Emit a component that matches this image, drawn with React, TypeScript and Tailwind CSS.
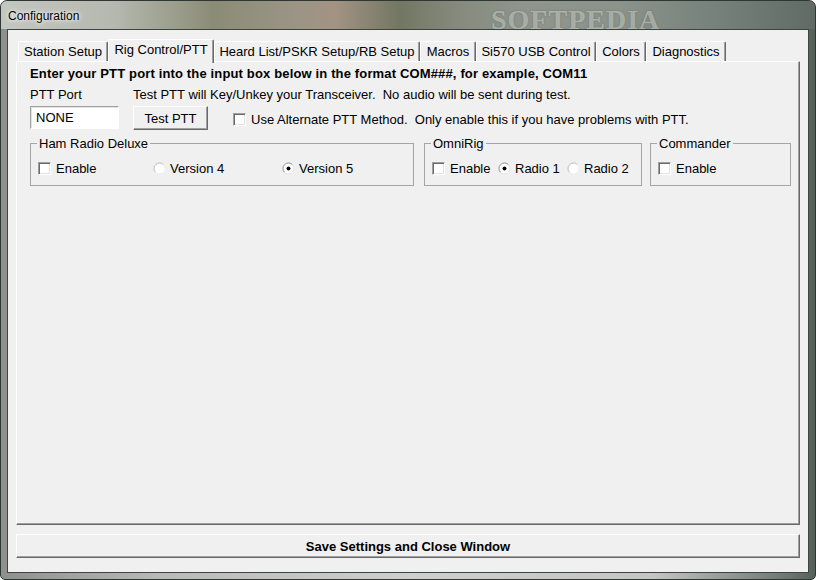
import React from "react";

const tabs = [
  { label: "Station Setup", w: "w-[90px]" },
  { label: "Rig Control/PTT", w: "w-[106px]", active: true },
  { label: "Heard List/PSKR Setup/RB Setup", w: "w-[206px]" },
  { label: "Macros", w: "w-[56px]" },
  { label: "Si570 USB Control", w: "w-[120px]" },
  { label: "Colors", w: "w-[50px]" },
  { label: "Diagnostics", w: "w-[80px]" },
];

function Check({ label }: { label: string }) {
  return (
    <span className="flex items-center h-[15px]">
      <span className="w-[13px] h-[13px] bg-white border border-t-[#a0a0a0] border-l-[#a0a0a0] border-r-white border-b-white shadow-[inset_1px_1px_0_#696969,inset_-1px_-1px_0_#e3e3e3]" />
      <span className="ml-[5px] whitespace-pre">{label}</span>
    </span>
  );
}

function Radio({ label, on }: { label: string; on?: boolean }) {
  return (
    <span className="flex items-center h-[15px]">
      <svg width="13" height="13" viewBox="0 0 13 13">
        <circle cx="6.5" cy="6.5" r="5.5" fill="#fff" />
        <path d="M2.6 10.4 A5.5 5.5 0 0 1 10.4 2.6" fill="none" stroke={on ? "#8c8c8c" : "#b9b9b9"} strokeWidth="1" />
        <path d="M10.4 2.6 A5.5 5.5 0 0 1 2.6 10.4" fill="none" stroke={on ? "#e2e2e2" : "#ececec"} strokeWidth="1" />
        {on && <circle cx="6.5" cy="6.5" r="2" fill="#000" />}
      </svg>
      <span className="ml-[4px] whitespace-pre">{label}</span>
    </span>
  );
}

function Group({
  title,
  w,
  children,
}: {
  title: string;
  w: string;
  children: React.ReactNode;
}) {
  return (
    <fieldset className={`${w} border border-[#a5a5a5] pl-[7px] pt-[10px] pb-[9px]`}>
      <legend className="-ml-[1px] px-[2px] leading-[15px]">{title}</legend>
      <div className="flex">{children}</div>
    </fieldset>
  );
}

export default function App() {
  return (
    <div className="w-[816px] h-[580px] flex flex-col rounded-t-[7px] rounded-b-[5px] border border-[#2e3733] overflow-hidden bg-[linear-gradient(90deg,#8d908c_0%,#b9bbb8_20%,#cfd0ce_50%,#c4c6c3_80%,#6c746f_97%,#56605a_100%)] font-['Liberation_Sans',Arial,sans-serif] text-[13px] text-black">
      {/* Titel */}
      <div className="relative h-[28px] flex items-center pl-[7px] bg-[linear-gradient(90deg,#c3c7c1_0%,#b4b8ae_14%,#999c88_22%,#8a8c76_26%,#9b9484_36%,#a39383_41%,#727762_49%,#868a7e_56%,#8f958b_64%,#8b938b_76%,#76817b_88%,#606b66_100%)]">
        <span className="absolute left-[490px] top-[4px] font-['Liberation_Serif',serif] font-bold text-[28px] leading-[30px] tracking-[1px] text-[#d9dcd5]/55 [text-shadow:0_0_2px_rgba(80,90,80,0.5)]">
          SOFTPEDIA
        </span>
        <span className="relative text-[12px] [text-shadow:0_0_6px_#fff,0_0_3px_#fff] mt-[1px]">
          Configuration
        </span>
      </div>

      <div className="flex-1 px-[6px] pb-[6px]">
        <div className="h-full border border-[#3d4441] bg-[#f0f0f0] px-[8px] pt-[9px] flex flex-col">
          {/* Tabs */}
          <div className="flex h-[22px] pl-[2px]">
            {tabs.map((t) =>
              t.active ? (
                <div
                  key={t.label}
                  className={`${t.w} relative z-10 h-[24px] bg-[#f0f0f0] border-l border-t border-r border-l-white border-t-white border-r-[#696969] rounded-t-[2px] shadow-[inset_-1px_0_0_#a0a0a0] pt-[2px] text-center leading-[15px] whitespace-nowrap`}
                >
                  {t.label}
                </div>
              ) : (
                <div
                  key={t.label}
                  className={`${t.w} mt-[2px] h-[20px] border-l border-t border-r border-l-white border-t-white border-r-[#696969] rounded-t-[2px] shadow-[inset_-1px_0_0_#a0a0a0] pt-[2px] text-center leading-[15px] whitespace-nowrap`}
                >
                  {t.label}
                </div>
              )
            )}
          </div>

          {/* Panel */}
          <div className="h-[464px] border border-l-white border-t-white border-r-[#696969] border-b-[#696969] shadow-[inset_-1px_-1px_0_#a0a0a0] pl-[13px] pt-[4px] leading-[15px]">
            <div className="font-bold tracking-[0.15px]">
              Enter your PTT port into the input box below in the format COM###, for example, COM11
            </div>
            <div className="flex mt-[6px]">
              <span className="w-[103px]">PTT Port</span>
              <span className="whitespace-pre">
                Test PTT will Key/Unkey your Transceiver.  No audio will be sent during test.
              </span>
            </div>
            <div className="flex items-start mt-[4px]">
              <div className="w-[89px] h-[23px] bg-white border border-t-[#a0a0a0] border-l-[#a0a0a0] border-r-white border-b-white shadow-[inset_1px_1px_0_#e3e3e3] pl-[5px] pt-[3px]">
                NONE
              </div>
              <button className="ml-[14px] w-[75px] h-[24px] bg-[#f0f0f0] border border-t-white border-l-white border-r-[#696969] border-b-[#696969] shadow-[inset_-1px_-1px_0_#a0a0a0] text-center">
                Test PTT
              </button>
              <span className="ml-[25px] mt-[6px]">
                <Check label="Use Alternate PTT Method.  Only enable this if you have problems with PTT." />
              </span>
            </div>

            <div className="flex items-start mt-[6px]">
              <Group title="Ham Radio Deluxe" w="w-[384px]">
                <span className="w-[115px]">
                  <Check label="Enable" />
                </span>
                <span className="w-[129px]">
                  <Radio label="Version 4" />
                </span>
                <Radio label="Version 5" on />
              </Group>
              <div className="w-[10px]" />
              <Group title="OmniRig" w="w-[218px]">
                <span className="w-[66px]">
                  <Check label="Enable" />
                </span>
                <span className="w-[69px]">
                  <Radio label="Radio 1" on />
                </span>
                <Radio label="Radio 2" />
              </Group>
              <div className="w-[8px]" />
              <Group title="Commander" w="w-[141px]">
                <Check label="Enable" />
              </Group>
            </div>
          </div>

          <button className="mt-[9px] h-[24px] w-full bg-[#f0f0f0] border border-t-white border-l-white border-r-[#696969] border-b-[#696969] shadow-[inset_-1px_-1px_0_#a0a0a0] font-bold text-center leading-[15px]">
            Save Settings and Close Window
          </button>
        </div>
      </div>
    </div>
  );
}
